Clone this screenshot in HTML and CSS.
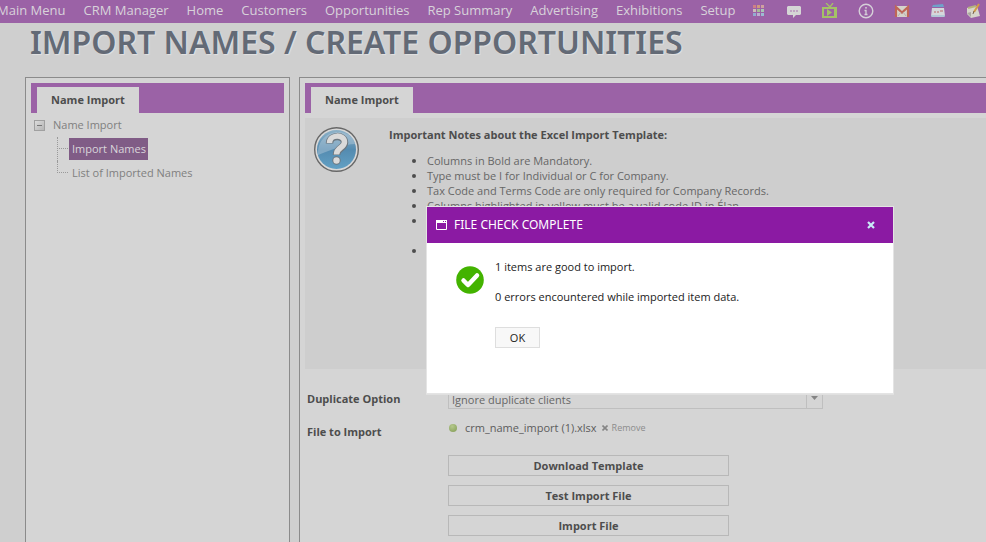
FILE: index.html
```html
<!DOCTYPE html>
<html lang="en">
<head>
<meta charset="utf-8">
<title>Import Names / Create Opportunities</title>
<link rel="stylesheet" href="styles.css">
</head>
<body>
<nav class="topbar">
  <div class="menu">
    <a href="#">Main Menu</a><a href="#">CRM Manager</a><a href="#">Home</a><a href="#">Customers</a><a href="#">Opportunities</a><a href="#">Rep Summary</a><a href="#">Advertising</a><a href="#">Exhibitions</a><a href="#">Setup</a>
  </div>
  <div class="tools">
    <a href="#" aria-label="Apps"><svg width="16" height="16" viewBox="0 0 16 16"><path fill="#cf8086" d="M3 2h3v3H3z"/><path fill="#d09a7c" d="M7 2h3v3H7z"/><path fill="#cfa0a0" d="M11 2h3v3h-3z"/><path fill="#cbbdb8" d="M3 6h3v3H3z"/><path fill="#a3bd95" d="M7 6h3v3H7z"/><path fill="#a9c5b5" d="M11 6h3v3h-3z"/><path fill="#93acd0" d="M3 10h3v3H3z"/><path fill="#bdaed0" d="M7 10h3v3H7z"/><path fill="#9cbcd2" d="M11 10h3v3h-3z"/></svg></a>
    <a href="#" aria-label="Chat"><svg width="16" height="16" viewBox="0 0 16 16"><path fill="#d5d5d5" d="M2 3h12l1 1v7l-1 1h-4l-3 3v-3H2l-1-1V4z"/><g fill="#b892bd"><circle cx="5" cy="8" r="1"/><circle cx="8" cy="8" r="1"/><circle cx="11" cy="8" r="1"/></g></svg></a>
    <a href="#" aria-label="Videos"><svg width="16" height="16" viewBox="0 0 16 16"><path d="M4 0l4 4 3-4" fill="none" stroke="#a4c266" stroke-width="1.3"/><path fill="#a4c266" fill-rule="evenodd" d="M0 4h15v11H0zM2 6v7h10V6z"/><path fill="#a4c266" d="M5 6l5 3.500-5 3.500zM13 6h1v7h-1z"/></svg></a>
    <a href="#" aria-label="Information"><svg width="16" height="16" viewBox="0 0 16 16" fill="none" stroke="#d5d0d8"><circle cx="8" cy="8" r="6.800" stroke-width="1.400"/><path d="M6.500 7.500h1.500v4M6.500 11.500h3M7 4.800h2" stroke-width="1.300"/></svg></a>
    <a href="#" aria-label="Mail"><svg width="16" height="16" viewBox="0 0 16 16"><path fill="#d5d2cb" d="M1 3h14v11H1z"/><path d="M2 14V4l6 5.500L14 4v10" fill="none" stroke="#bf6657" stroke-width="2.200"/><path d="M4 13l3-4M12 13L9 9" stroke="#b8afa8"/></svg></a>
    <a href="#" aria-label="Calendar"><svg width="16" height="16" viewBox="0 0 16 16"><path fill="#6fa2ca" d="M3 2l10-1 1 3H2z"/><path fill="#d5d7db" d="M2 5h12l1 8-1 1H2l-1-1z"/><path d="M1 13h14" stroke="#91b8d2"/><path d="M4 9h2M7 9h2M10 8h3" fill="none" stroke="#c99fa3" stroke-width="2"/></svg></a>
    <a href="#" aria-label="Notes"><svg width="16" height="16" viewBox="0 0 16 16"><path fill="#d7d5cb" d="M1 5l10-2 3 10-9 2-4-4z"/><path fill="#aaa99f" d="M1 10l4-1v5z"/><path d="M2 5l8-2" stroke="#b4b37d" stroke-width="2"/><path d="M13 1L8 9" stroke="#d39a46" stroke-width="2"/><path d="M8 8l-1 3" stroke="#766452"/></svg></a>
  </div>
</nav>

<h1>IMPORT NAMES / CREATE OPPORTUNITIES</h1>

<main class="columns">
  <aside class="panel side">
    <div class="tabs"><a class="tab" href="#">Name Import</a></div>
    <div class="tree">
      <div class="root"><button class="toggle" aria-label="Collapse"></button><a href="#">Name Import</a></div>
      <ul class="branch">
        <li><a class="selected" href="#">Import Names</a></li>
        <li><a href="#">List of Imported Names</a></li>
      </ul>
    </div>
  </aside>

  <section class="panel content">
    <div class="tabs"><a class="tab" href="#">Name Import</a></div>
    <div class="notes">
      <svg class="help" width="46" height="46" viewBox="0 0 46 46">
        <defs><linearGradient id="blue" x1="0" y1="0" x2="0" y2="1"><stop offset="0" stop-color="#8eb2c8"/><stop offset=".5" stop-color="#548bb0"/><stop offset="1" stop-color="#62a0c4"/></linearGradient></defs>
        <circle cx="22.500" cy="22.500" r="21.800" fill="#d8d8d8" stroke="#686868" stroke-width="1.400"/>
        <circle cx="22.500" cy="22.500" r="19.500" fill="url(#blue)"/>
        <path d="M4 26C4 2 36-2 41 17 30 17 20 22 4 28z" fill="#b7cddb" opacity=".45"/>
        <path d="M15.500 16.500c0-9 15-9 15-1 0 6-8 5-8 12.500" fill="none" stroke="#6d7880" stroke-width="7.500"/>
        <circle cx="22.500" cy="33.500" r="4.200" fill="#6d7880"/>
        <path d="M15.500 16c0-9 15-9 15-1 0 6-8 5-8 12.500" fill="none" stroke="#dadada" stroke-width="5.500"/>
        <circle cx="22.500" cy="33.500" r="3.200" fill="#dadada"/>
      </svg>
      <div class="copy">
        <h2>Important Notes about the Excel Import Template:</h2>
        <ul>
          <li>Columns in Bold are Mandatory.</li>
          <li>Type must be I for Individual or C for Company.</li>
          <li>Tax Code and Terms Code are only required for Company Records.</li>
          <li>Columns highlighted in yellow must be a valid code ID in Élan.</li>
          <li class="tall"></li>
          <li></li>
        </ul>
      </div>
    </div>
    <form class="form">
      <label for="dup">Duplicate Option</label>
      <div class="pick">
        <select id="dup"><option>Ignore duplicate clients</option></select>
        <svg class="arrow" width="17" height="20" viewBox="0 0 17 20"><path d="M.5 0v20" stroke="#bfbfbf"/><path d="M5 7h7l-3.500 4z" fill="#858585"/></svg>
      </div>
      <span class="label">File to Import</span>
      <div class="upload">
        <div class="file"><i class="dot"></i><span>crm_name_import (1).xlsx</span><button type="button" class="remove"><svg width="6" height="6" viewBox="0 0 6 6"><path d="M.5.5l5 5M5.500.5l-5 5" stroke="#858585" stroke-width="1.600"/></svg>Remove</button></div>
        <button type="button" class="action">Download Template</button>
        <button type="button" class="action">Test Import File</button>
        <button type="button" class="action">Import File</button>
      </div>
    </form>
  </section>
</main>

<div class="dialog" role="dialog" aria-labelledby="dialog-title">
  <header>
    <svg width="11" height="10" viewBox="0 0 11 10"><path d="M.5.5h10v9H.5z" fill="none" stroke="#fff"/><path d="M0 0h11v3H0z" fill="#fff"/><path d="M7 1h1v1H7zM9 1h1v1H9z" fill="#8b1aa3"/></svg>
    <h3 id="dialog-title">FILE CHECK COMPLETE</h3>
    <button class="close" aria-label="Close"><svg width="8" height="8" viewBox="0 0 8 8"><path d="M1 1l6 6M7 1L1 7" stroke="#c9ecf7" stroke-width="2.200"/></svg></button>
  </header>
  <div class="message">
    <svg width="28" height="28" viewBox="0 0 28 28"><circle cx="14" cy="14" r="13.800" fill="#43b300"/><path d="M7.500 14.500l4.500 4.500 9-9.500" fill="none" stroke="#fff" stroke-width="4.500" stroke-linecap="round" stroke-linejoin="round"/></svg>
    <div>
      <p>1 items are good to import.</p>
      <p>0 errors encountered while imported item data.</p>
      <button class="ok">OK</button>
    </div>
  </div>
</div>
</body>
</html>
```
FILE: styles.css
```css
* { box-sizing: border-box; }
html { height: 100%; }
body {
  margin: 0;
  height: 100%;
  display: flex;
  flex-direction: column;
  overflow: hidden;
  background: #cfcfcf;
  color: #4d4d4d;
  font: 11px/15px "Open Sans", "Noto Sans", sans-serif;
}
a { color: inherit; text-decoration: none; }
button, select { font: inherit; color: inherit; padding: 0; margin: 0; border-radius: 0; }
h1, h2, h3, p, ul { margin: 0; padding: 0; }
svg { display: block; flex: none; }

.topbar {
  display: flex;
  flex: none;
  height: 23px;
  background: #9b62a6;
  color: #d8d2da;
  font-size: 13px;
  line-height: 21px;
  white-space: nowrap;
}
.menu { display: flex; gap: 18px; margin-left: -3px; }
.tools { display: flex; margin-left: 5px; }
.tools a { width: 36px; height: 21px; display: flex; flex: none; align-items: center; justify-content: center; }

h1 {
  flex: none;
  margin-left: 30px;
  font-family: "Noto Sans", "Open Sans", sans-serif;
  font-size: 32px;
  line-height: 37px;
  font-weight: 600;
  color: #636a76;
  text-shadow: 1px 1px 1px #e2e2e2;
  white-space: nowrap;
}

.columns {
  flex: 1;
  min-height: 0;
  display: flex;
  gap: 9px;
  margin: 17px -10px -10px 25px;
}
.panel { background: #d5d5d5; border: 1px solid #8b8b8b; padding: 5px; }
.side { flex: none; width: 265px; }
.content { flex: 1; min-width: 0; }
.tabs { height: 30px; padding: 4px 6px 0; background: #9b62a6; }
.tab {
  display: inline-block;
  height: 26px;
  padding: 0 14px;
  background: #d5d5d5;
  font-weight: 700;
  line-height: 26px;
}

.tree { color: #808080; padding-left: 3px; }
.root { display: flex; align-items: center; gap: 8px; height: 24px; line-height: 24px; }
.toggle {
  width: 11px;
  height: 11px;
  border: 1px solid #a0a0a0;
  background: linear-gradient(#777, #777) center / 5px 1px no-repeat, linear-gradient(135deg, #dcdcdc, #b5b5b5);
}
.branch { list-style: none; margin-left: 23px; }
.branch li { position: relative; height: 24px; padding: 1px 0 1px 12px; }
.branch li::before {
  content: "";
  position: absolute;
  left: 0;
  top: 0;
  width: 10px;
  height: 11px;
  border-left: 1px dotted #999;
  border-bottom: 1px dotted #999;
}
.branch li:first-child::after { content: ""; position: absolute; left: 0; top: 11px; height: 13px; border-left: 1px dotted #999; }
.branch a { display: inline-block; height: 22px; padding: 0 2px 0 3px; line-height: 22px; }
.branch .selected { background: #805c86; color: #d9d5da; }

.notes { display: flex; height: 251px; margin-top: 5px; padding: 9px; background: #cecece; }
.copy { margin-left: 29px; }
h2 { font-size: 11px; line-height: 15px; font-weight: 700; }
.copy ul { margin-top: 11px; padding-left: 38px; color: #666; }
.copy li::marker { color: #4d4d4d; }
.copy li { min-height: 15px; }
.copy .tall { min-height: 30px; }

.form {
  display: grid;
  grid-template-columns: 141px 375px;
  margin: 19px 0 0 2px;
  row-gap: 10px;
}
.form label, .label { font-weight: 700; line-height: 22px; }
.label { padding-top: 1px; }
.pick { position: relative; }
.pick select {
  appearance: none;
  display: block;
  width: 100%;
  height: 21px;
  padding: 2px 20px 0 3px;
  border: 1px solid #bfbfbf;
  background: #d5d5d5;
  color: #666;
}
.arrow { position: absolute; right: 0; top: 1px; pointer-events: none; }
.file { display: flex; align-items: center; height: 15px; color: #5c5c5c; }
.dot { width: 8px; height: 8px; margin: 0 8px 0 1px; border-radius: 50%; background: radial-gradient(circle at 40% 30%, #b5c88c, #829c55); }
.remove { display: flex; align-items: center; gap: 4px; margin-left: 5px; border: 0; background: none; color: #8c8c8c; font-size: 9px; }
.action {
  display: block;
  width: 281px;
  height: 21px;
  margin-top: 9px;
  border: 1px solid #b8b8b8;
  background: #d5d5d5;
  font-weight: 700;
}
.file + .action { margin-top: 20px; }

.dialog {
  position: absolute;
  left: 426px;
  top: 206px;
  width: 468px;
  border: 1px solid #e4e4e4;
  background: #fff;
  color: #222;
  box-shadow: 0 1px 0 #e0e0e0;
}
.dialog header { display: flex; align-items: center; height: 36px; padding: 0 18px 0 9px; background: #8b1aa3; color: #fff; }
h3 { flex: 1; margin-left: 7px; font: 400 12px/18px "Noto Sans", "Open Sans", sans-serif; }
.close { border: 0; background: none; }
.message { display: flex; gap: 11px; padding: 16px 29px 45px; }
.message svg { margin-top: 7px; }
.message p { margin-bottom: 15px; }
.message p + p { margin-bottom: 23px; }
.ok { width: 45px; height: 21px; border: 1px solid #dedede; background: #f8f8f8; }
```
